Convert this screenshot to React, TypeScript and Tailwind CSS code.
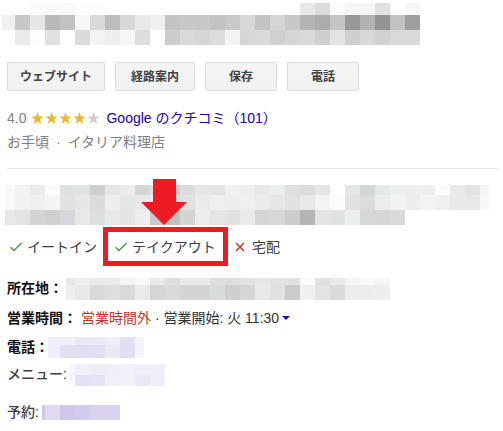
import React, {FC, ReactNode} from 'react';

type MosaicAttrs = {
  first: number;
  last?: number;
  heights: number[];
  rows: string[];
  className?: string;
};

const TITLE = [
  'ff ff fa fa f9 fd fd ff ff ff ff ff ff ff ff ff ff ff ff ff e9 dc fb f5 f5 e1 ff f7',
  'f0 c8 e6 b9 c2 f6 d9 bd d8 e9 f0 c3 c8 c8 c3 c9 d7 c3 d5 c8 b3 ac c4 98 b2 94 c2 9e',
  'ff ea fd e1 ff db f3 ee f6 dd ff cd d9 d6 dc f3 d6 da d0 d6 d9 cf e3 cf d8 d1 d9 d9',
];

const SUMMARY = [
  'f8 f2 eb fc dfe2e1 e0e3e2 cf e4e7e6 ec d6 e0 c8cbca dc e6 e4 f0 ee e8 ebeeed df dc e5 ff e4e7e6 d3d6d5 e4e8e6 ecefee ee ef fc ea e3 f5',
  'f9 f2 f0 f5 e0e3e2 e6 db ee e3e6e5 e9 f0 d8 dfe2e1 ea edf0ef ee ef eb e7 e1 e8 f4 fc e2 dc ed f2 ee f4 f0 e8 e8 f7',
];

const SUMMARY_END = [
  'e7 e1e4e3 d4 cfd0d2 d6d7da e8 dcdfde e8 e2e5e4 ee c8c8ca c0c1c3 d4 ec e5 e2 e9ebea d6 d7 cccdcf b4b5b7 e1e4e3 e0e3e2 ee d6d8d7 d4d7d6 d9',
];

const ADDRESS = [
  'e6 ecefee ea ea f4 f8 e9 dde0df e8 e8 de df e1 e6 e3 e2 fa e1 e9 f4 fa f5',
  'ee e8 d9 de d9 ea d5 da d4 d4 d9dcdb cf d6 e8 e1 cb f0 e4 db ec ec ee',
];

const PHONE = [
  'f1effa f1effa ebe8f5 ebe8f5 f0eefa e2def3 f5f4fb',
  'f0eefa e3dff3 e1ddf2 e2def3 ebe8f6 e2def3 f5f4fb',
];

const MENU = [
  'f7f6fb f2f0fa efedf8 f0eef9 f2f0fa f0eef9 f0eef9',
  'f8f8f8 e5e1f4 e6e3f4 f1effa f2f0fa eae7f6 efedf9',
];

const BOOKING = ['cec8e9 dfd9f2 cfc8eb d2ccec d9d3f0 d7d2ef'];

const CELL = 15;

// Pixelated strip: two-digit cells are greys, six-digit cells are full colours
const Mosaic: FC<MosaicAttrs> = ({first, last = CELL, heights, rows, className}) => {
  const count = rows[0].split(' ').length;
  const width = first + (count - 2) * CELL + last;
  const height = heights.reduce((a, b) => a + b, 0);

  return (
    <svg width={width} height={height} shapeRendering="crispEdges" aria-hidden="true" className={`shrink-0 ${className ?? ''}`}>
      {rows.map((row, r) => {
        const y = heights.slice(0, r).reduce((a, b) => a + b, 0);
        return row.split(' ').map((c, i) => (
          <rect
            key={`${r}-${i}`}
            x={i === 0 ? 0 : first + (i - 1) * CELL}
            y={y}
            width={i === 0 ? first : i === count - 1 ? last : CELL}
            height={heights[r]}
            fill={`#${c.length === 2 ? c + c + c : c}`}
          />
        ));
      })}
    </svg>
  );
};

const Action: FC<{children: ReactNode; className: string}> = ({children, className}) => (
  <button
    type="button"
    className={`h-[29px] rounded-[2px] border border-[#dadce0] bg-linear-to-b from-[#f5f5f5] to-[#f1f1f1] text-xs font-bold text-[#444] ${className}`}
  >
    {children}
  </button>
);

const Stars: FC = () => (
  <svg width="69" height="13" viewBox="0 0 69 13" role="img" aria-label="4.0">
    {[0, 1, 2, 3, 4].map((i) => (
      <path
        key={i}
        transform={`translate(${i * 14} 0)`}
        d="M6.5 0 8 4.5 12.6 4.6 9 7.4 10.4 12 6.5 9.3 2.6 12 4 7.4 0.4 4.6 5 4.5Z"
        fill={i < 4 ? '#e7b931' : '#cfcfcf'}
      />
    ))}
  </svg>
);

const Check: FC = () => (
  <svg width="12" height="10" viewBox="0 0 12 10" fill="none" stroke="#4a944a" strokeWidth="1.4" aria-hidden="true">
    <path d="M0.6 5.2 4 8.6 11.5 1" />
  </svg>
);

const Cross: FC = () => (
  <svg width="10" height="10" viewBox="0 0 10 10" fill="none" stroke="#c5362c" strokeWidth="1.5" aria-hidden="true">
    <path d="M1 1 9 9M9 1 1 9" />
  </svg>
);

const Arrow: FC = () => (
  <svg width="46" height="46" viewBox="0 0 46 46" aria-hidden="true" className="absolute bottom-full left-[33px] mb-[7px]">
    <path d="M12 0H35V23H46L23 46 0 23H12Z" fill="#ed1c24" />
  </svg>
);

export default function App() {
  return (
    <main className="bg-white pt-[3px] pb-2 font-['Liberation_Sans','Noto_Sans_CJK_JP',sans-serif] text-sm leading-5 text-[#3c4043]">
      <Mosaic first={13} heights={[12, 15, 15]} rows={TITLE} className="ml-0.5" />

      <div className="mt-[17px] flex gap-2.5 pl-[7px]">
        <Action className="w-[98px]">ウェブサイト</Action>
        <Action className="w-20">経路案内</Action>
        <Action className="w-[72px]">保存</Action>
        <Action className="w-[72px]">電話</Action>
      </div>

      <section className="mt-[17px] mr-1.5 ml-[7px] border-b border-[#e8e8e8] pb-4 text-[#808080]">
        <div className="flex h-5 items-center">
          <span className="mr-[5px]">4.0</span>
          <Stars />
          <a href="#reviews" className="ml-1.5 text-[#2200b3]">Google のクチコミ（101）</a>
        </div>
        <p className="mt-1 flex h-5 gap-[7px]">
          <span>お手頃</span>
          <span>·</span>
          <span>イタリア料理店</span>
        </p>
      </section>

      <Mosaic first={10} last={9} heights={[10, 15]} rows={SUMMARY} className="mt-4 ml-[5px]" />
      <Mosaic first={10} heights={[15]} rows={SUMMARY_END} className="ml-[5px]" />

      <ul className="mt-0.5 flex h-[39px] items-center pl-2.5">
        <li className="flex items-center gap-[5px]">
          <Check />
          イートイン
        </li>
        <li className="relative ml-1.5 flex h-full w-[125px] items-center gap-[5px] border-5 border-[#ed1c24] pl-[7px]">
          <Arrow />
          <Check />
          テイクアウト
        </li>
        <li className="ml-[7px] flex items-center gap-[7px]">
          <Cross />
          宅配
        </li>
      </ul>

      <dl className="mt-3 pl-[7px]">
        <div className="flex h-[22px]">
          <dt className="w-[59px] font-bold text-[#111]">所在地：</dt>
          <dd><Mosaic first={9} heights={[7, 15]} rows={ADDRESS} /></dd>
        </div>
        <div className="mt-2 flex h-5">
          <dt className="w-[74px] font-bold whitespace-nowrap text-[#111]">営業時間：</dt>
          <dd className="flex items-center text-[#333]">
            <span className="whitespace-pre"><span className="text-[#c5362c]">営業時間外</span> · 営業開始: 火 11:30</span>
            <svg width="8" height="4" viewBox="0 0 8 4" className="ml-[3px]" aria-hidden="true">
              <path d="M0 0H8L4 4Z" fill="#2200b3" />
            </svg>
          </dd>
        </div>
        <div className="mt-[9px] flex h-[21px]">
          <dt className="w-[41px] font-bold whitespace-nowrap text-[#111]">電話：</dt>
          <dd><Mosaic first={12} last={9} heights={[8, 13]} rows={PHONE} /></dd>
        </div>
        <div className="mt-1.5 flex h-[22px]">
          <dt className="w-[62px] font-medium whitespace-nowrap">メニュー:</dt>
          <dd><Mosaic first={6} heights={[11, 11]} rows={MENU} /></dd>
        </div>
        <div className="mt-4 flex h-5 items-center">
          <dt className="w-[35px] font-medium whitespace-nowrap">予約:</dt>
          <dd><Mosaic first={3} heights={[15]} rows={BOOKING} /></dd>
        </div>
      </dl>
    </main>
  );
}
